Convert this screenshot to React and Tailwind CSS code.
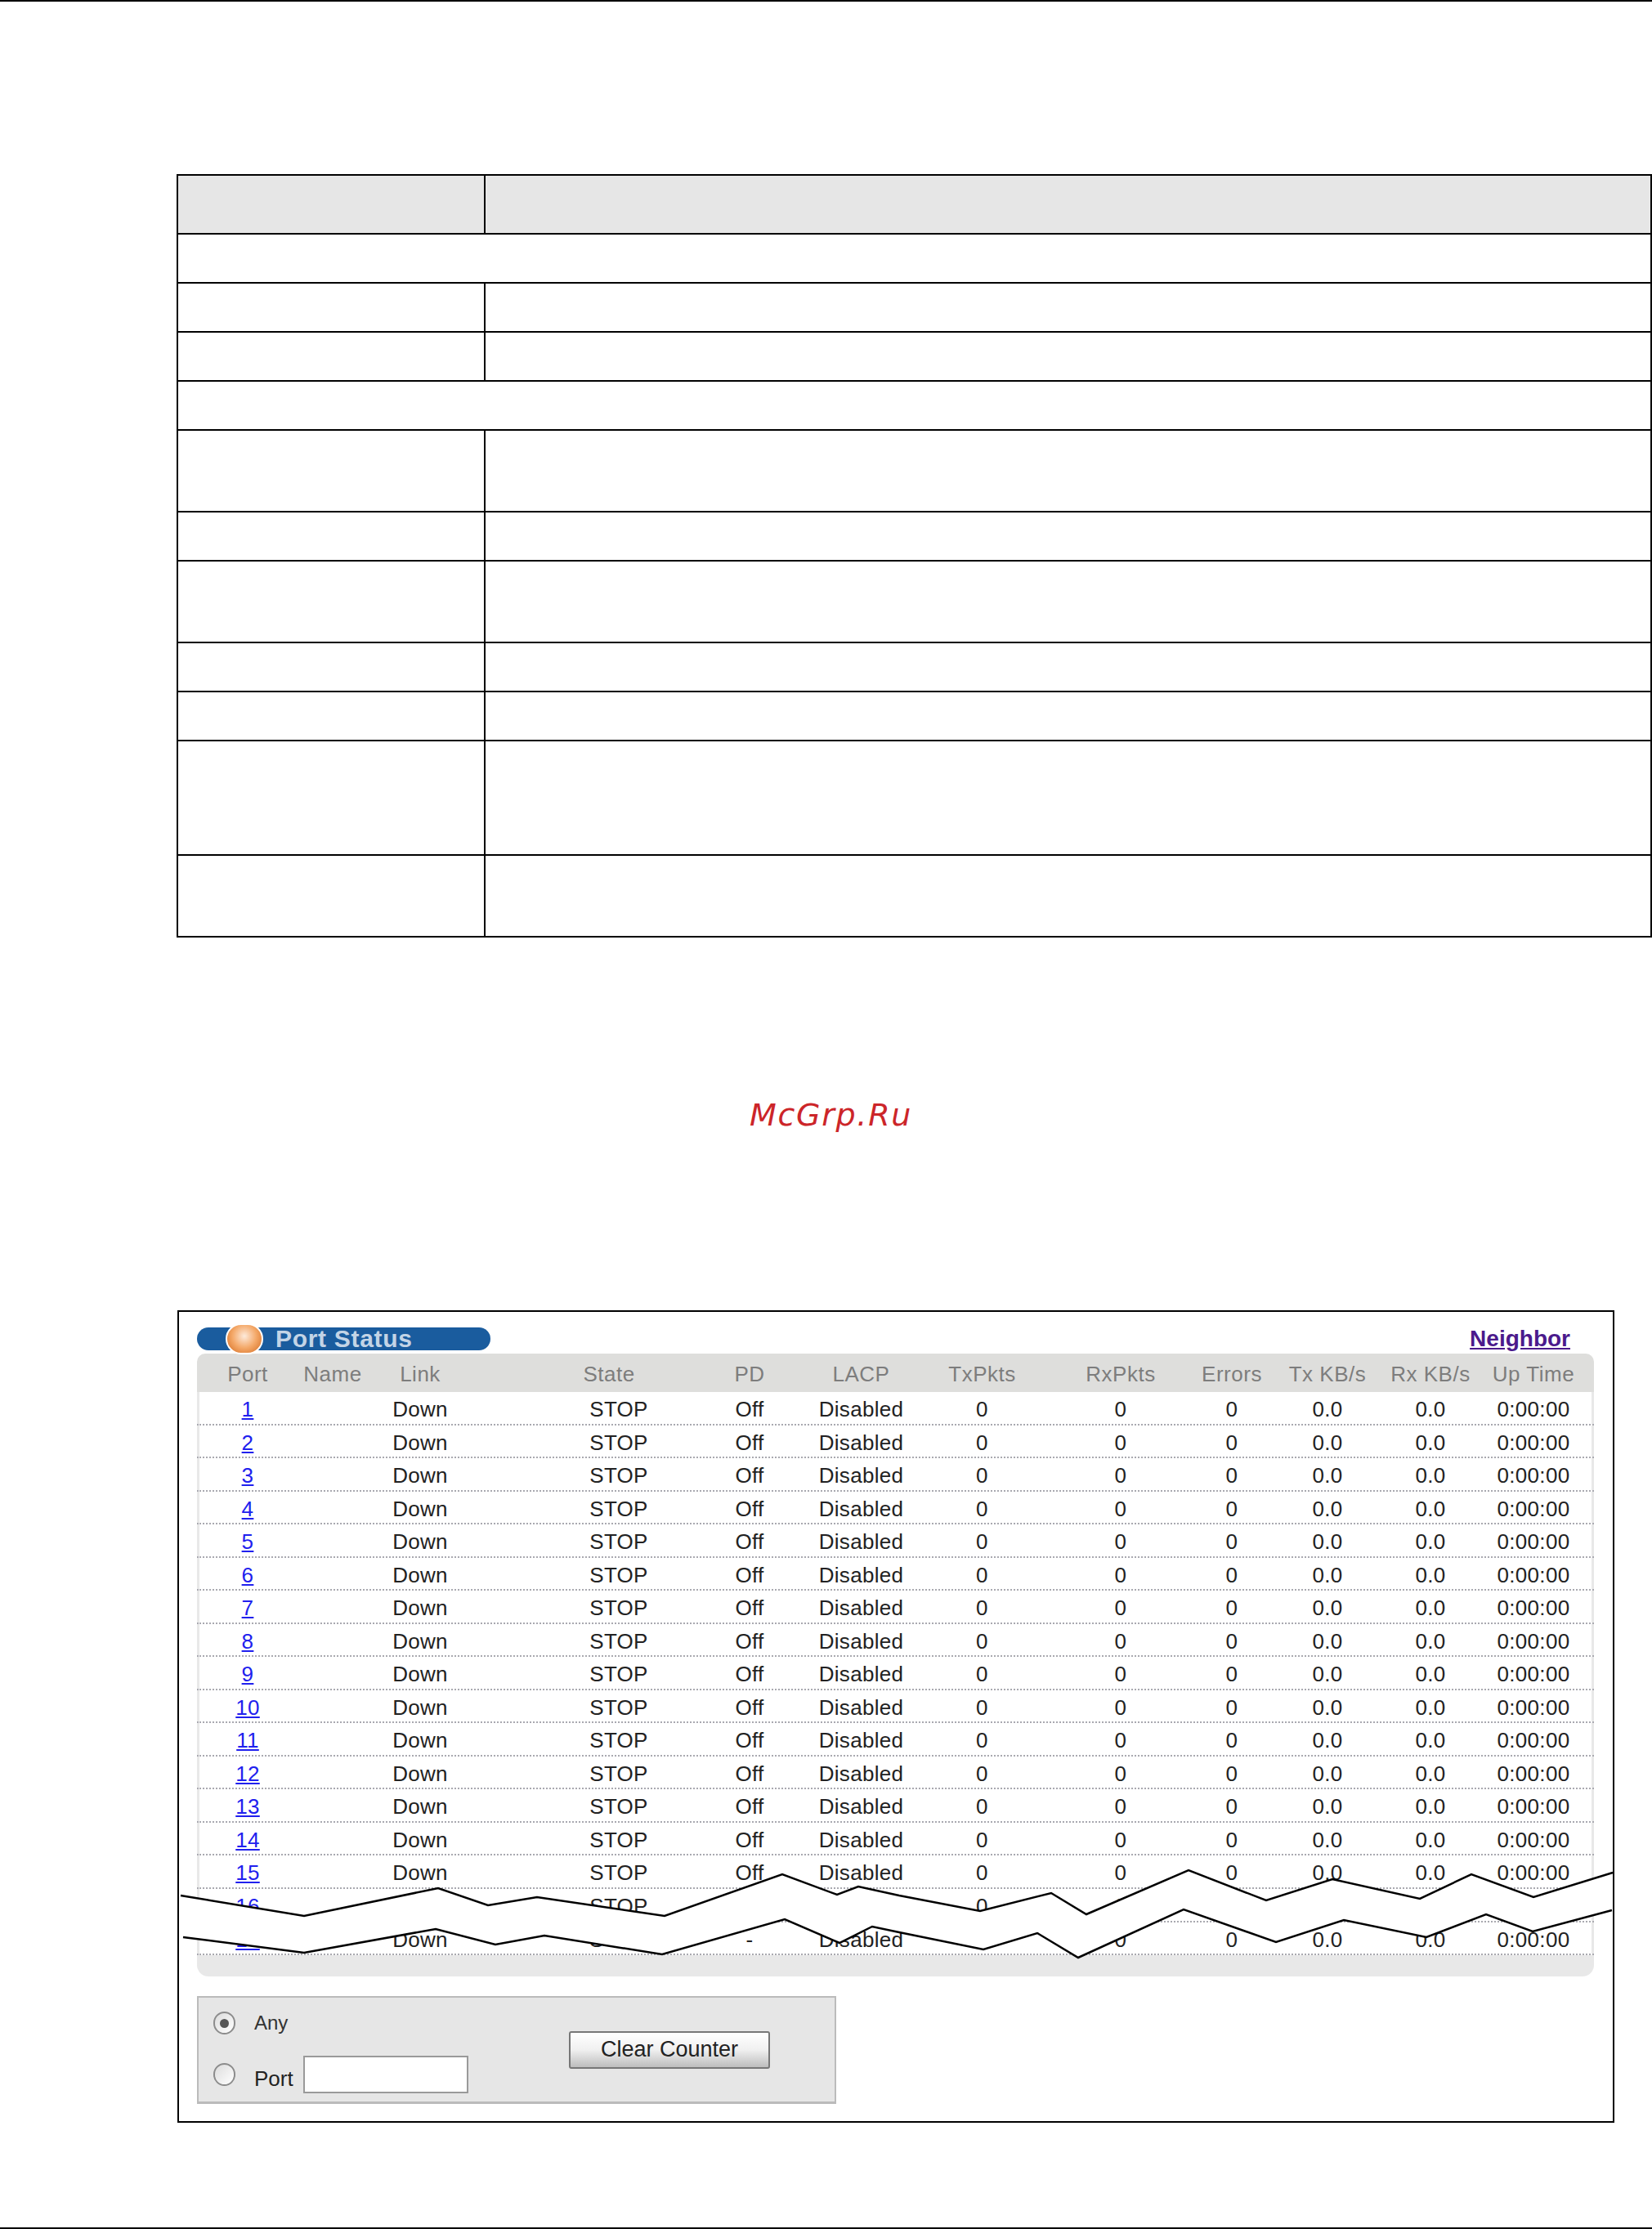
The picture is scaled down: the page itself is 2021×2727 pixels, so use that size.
import React from 'react'

const GRID = 'grid grid-cols-[124px_84px_130px_273px_130px_143px_153px_186px_86px_148px_104px_148px] items-center text-center'

// heights of the empty spec table rows, span = merged full width row
const specRows = [
    { h: 60, span: true },
    { h: 60 },
    { h: 60 },
    { h: 60, span: true },
    { h: 100 },
    { h: 60 },
    { h: 100 },
    { h: 60 },
    { h: 60 },
    { h: 140 },
    { h: 100 },
]

const ports = [...Array(17).keys()].map((i) => i + 1)

const SpecTable = () => {
    return (
        <div className="ml-[216px] mt-[211px] w-[1805px] border-l-2 border-r-2 border-t-2 border-black">
            <div className="flex h-[72px] border-b-2 border-black bg-[#e6e6e6]">
                <div className="w-[376px] border-r-2 border-black"></div>
            </div>
            {specRows.map((row, index) => {
                return (
                    <div key={index} style={{ height: row.h }} className="flex border-b-2 border-black">
                        {!row.span && <div className="w-[376px] border-r-2 border-black"></div>}
                    </div>
                )
            })}
        </div>
    )
}

const Radio = ({ checked }) => {
    return (
        <span className="flex h-[28px] w-[27px] shrink-0 items-center justify-center rounded-full border-2 border-[#8c8c8c] bg-gradient-to-br from-[#dcdcdc] to-white">
            {checked && <span className="h-[11px] w-[11px] rounded-full bg-[#555]"></span>}
        </span>
    )
}

const PortRow = ({ port }) => {
    return (
        <div className={GRID + ' h-[40.54px] border-b-2 border-dotted border-[#a9a9b0] bg-white pt-[2px] text-[26px] tracking-[0.3px] text-[#222] shadow-[inset_3px_0_0_#e8e8e8,inset_-3px_0_0_#e8e8e8]'}>
            <a href="#" className="text-[#2020ee] underline">{port}</a>
            <span></span>
            <span>Down</span>
            <span className="pl-[83px]">STOP</span>
            <span>{port === 17 ? '-' : 'Off'}</span>
            <span>Disabled</span>
            <span>0</span>
            <span>0</span>
            <span>0</span>
            <span>0.0</span>
            <span>0.0</span>
            <span>0:00:00</span>
        </div>
    )
}

const PortStatus = () => {
    return (
        <div className="relative ml-[217px] h-[994px] w-[1758px] border-2 border-black pl-[22px] pt-[19px]">
            <div className="flex h-[28px] w-[1680px] items-center justify-between">
                <div className="relative h-[28px] w-[359px] rounded-full bg-[#1a5c9e] pl-[96px] text-[30px] leading-[28px] font-bold tracking-[0.7px] text-[#c3d4e6]">
                    Port Status
                    <span className="absolute left-[35px] top-[-5px] h-[38px] w-[46px] rounded-full border-2 border-white bg-[radial-gradient(circle_at_50%_40%,#fdeadb_0%,#f4a868_50%,#d2691e_100%)]"></span>
                </div>
                <a href="#" className="text-[28px] leading-[28px] font-bold text-[#4b1a8c] underline">Neighbor</a>
            </div>

            <div className="mt-[4px] w-[1709px]">
                <div className={GRID + ' h-[47px] rounded-t-[10px] bg-[#dededc] pt-[3px] text-[26px] tracking-[0.5px] text-[#7d7d7d]'}>
                    <span>Port</span>
                    <span>Name</span>
                    <span>Link</span>
                    <span className="pl-[59px]">State</span>
                    <span>PD</span>
                    <span>LACP</span>
                    <span>TxPkts</span>
                    <span>RxPkts</span>
                    <span>Errors</span>
                    <span>Tx KB/s</span>
                    <span>Rx KB/s</span>
                    <span>Up Time</span>
                </div>
                {ports.map((port) => <PortRow key={port} port={port} />)}
                <div className="h-[26px] rounded-b-[14px] bg-[#e8e8e8]"></div>
            </div>

            <div className="mt-[24px] flex h-[132px] w-[782px] border-2 border-b-[3px] border-[#bbbbbb] bg-[#e6e6e6] pl-[18px] pt-[7px]">
                <div className="flex w-[313px] flex-col gap-[16px]">
                    <div className="flex h-[48px] items-center gap-[23px]">
                        <Radio checked />
                        <span className="text-[24px] text-[#333]">Any</span>
                    </div>
                    <div className="flex h-[46px] items-center">
                        <Radio />
                        <span className="ml-[23px] mr-[12px] mt-[10px] text-[26px] text-[#222]">Port</span>
                        <input className="h-[46px] w-[202px] border-2 border-[#9a9a9a] bg-white" />
                    </div>
                </div>
                <button className="ml-[122px] mb-[7px] h-[46px] w-[246px] self-center rounded-[3px] border-2 border-[#777] bg-gradient-to-b from-white via-[#f0f0f0] to-[#bdbdbd] text-[27px] leading-none text-[#222]">
                    Clear Counter
                </button>
            </div>

            {/* break across the table */}
            <svg className="absolute left-[-219px] top-[-1605px] h-[2727px] w-[2021px]" viewBox="0 0 2021 2727">
                <polygon
                    fill="white"
                    points="221,2319 372,2344 536,2310 597,2331 657,2321 813,2344 957,2293 1024,2318 1050,2308 1100,2319 1199,2338 1286,2316 1329,2342 1454,2288 1549,2325 1630,2299 1737,2323 1800,2293 1876,2321 1973,2291 1972,2337 1875,2363 1818,2342 1745,2370 1644,2349 1561,2376 1448,2336 1319,2395 1269,2365 1203,2385 1100,2364 1067,2357 1027,2377 960,2348 810,2391 666,2368 606,2379 533,2360 372,2389 224,2370"
                />
                <polyline
                    fill="none"
                    stroke="black"
                    strokeWidth="2.5"
                    points="221,2319 372,2344 536,2310 597,2331 657,2321 813,2344 957,2293 1024,2318 1050,2308 1100,2319 1199,2338 1286,2316 1329,2342 1454,2288 1549,2325 1630,2299 1737,2323 1800,2293 1876,2321 1973,2291"
                />
                <polyline
                    fill="none"
                    stroke="black"
                    strokeWidth="2.5"
                    points="224,2370 372,2389 533,2360 606,2379 666,2368 810,2391 960,2348 1027,2377 1067,2357 1100,2364 1203,2385 1269,2365 1319,2395 1448,2336 1561,2376 1644,2349 1745,2370 1818,2342 1875,2363 1972,2337"
                />
            </svg>
        </div>
    )
}

const App = () => {
    return (
        <div className="flex h-[2727px] w-[2021px] flex-col overflow-hidden bg-white font-['Liberation_Sans',Arial,sans-serif]">
            <div className="h-[2px] bg-black"></div>
            <SpecTable />
            <div className="mt-[194px] h-[46px] pl-[917px] font-['DejaVu_Sans',sans-serif] text-[38px] leading-[46px] italic tracking-[1.7px] text-[#cc2529]">
                McGrp.Ru
            </div>
            <div className="mt-[216px]">
                <PortStatus />
            </div>
            <div className="mt-auto h-[2px] bg-black"></div>
        </div>
    )
}

export default App
